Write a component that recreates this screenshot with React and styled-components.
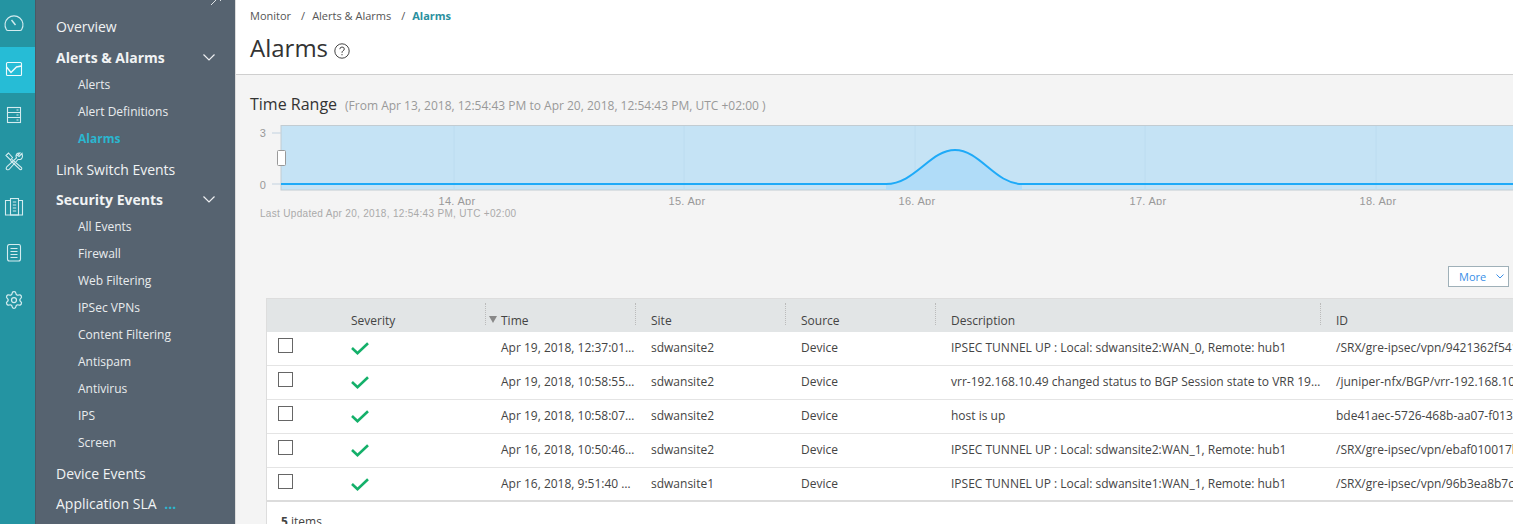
import React from "react";
import styled, { createGlobalStyle } from "styled-components";
import { Settings } from "lucide-react";

const GlobalStyle = createGlobalStyle`
  html, body {
    margin: 0;
    height: 100%;
    overflow: hidden;
    background: #fff;
    font-family: "Open Sans", "Liberation Sans", sans-serif;
  }
`;

const RailSvg = ({ children }) => (
  <svg viewBox="0 0 20 20" width="20" height="20">
    {children}
  </svg>
);

const GearIcon = styled(Settings)`
  && {
    stroke-width: 1.500;
  }
`;

const railIcons = [
  <RailSvg>
    <path d="M2.300 15.500 A9 9 0 1 1 17.700 15.500 Q17.300 16.500 16 16.500 H4 Q2.700 16.500 2.300 15.500 Z" />
    <path d="M7.500 6 L11.500 11" strokeWidth="1.400" />
  </RailSvg>,
  <RailSvg>
    <rect x="2.500" y="2.500" width="15" height="13" rx="1" />
    <path d="M2.500 7 L7 12.500 L12.500 7 L17.500 6" strokeWidth="1.400" />
  </RailSvg>,
  <RailSvg>
    <rect x="3.500" y="1.500" width="13" height="15" />
    <path d="M3.500 6.500 H16.500 M3.500 11.500 H16.500 M12.500 4 H14.500 M12.500 9 H14.500 M12.500 14 H14.500" />
  </RailSvg>,
  <RailSvg>
    <path d="M2 3.500 L4.500 1 L8.500 5.500 L6.500 8 Z M8 7.500 L17.500 15.500 Q18.500 18 16 17.500 L6.500 8.500" />
    <path d="M18 1.500 L15 4.500 L13.500 3.500 L16 1 Q12.500 0.500 12 3.800 Q12 5 12.500 5.800 L3 14.500 Q1.500 16.500 2.800 17.500 Q4.500 18.300 5.500 17 L14 7.500 Q18.300 8 18.500 4.300 Z" />
  </RailSvg>,
  <RailSvg>
    <rect x="6.500" y="0.500" width="8" height="16.500" />
    <path d="M6.500 2.500 H1.500 V17 H18.500 V2.500 H14.500 M8.800 4 H12.200 M8.800 7 H12.200 M8.800 10 H12.200 M8.800 13 H12.200" />
  </RailSvg>,
  <RailSvg>
    <rect x="3.500" y="0.500" width="13" height="16.500" rx="2" />
    <path d="M6.500 4.500 H13.500 M6.500 7.500 H13.500 M6.500 10.500 H13.500 M6.500 13.500 H13.500" />
  </RailSvg>,
  <GearIcon size={20} />,
];

const navItems = [
  { label: "Overview", gap: 1 },
  {
    label: "Alerts & Alarms",
    open: true,
    children: ["Alerts", "Alert Definitions", "Alarms"],
  },
  { label: "Link Switch Events" },
  {
    label: "Security Events",
    open: true,
    children: [
      "All Events",
      "Firewall",
      "Web Filtering",
      "IPSec VPNs",
      "Content Filtering",
      "Antispam",
      "Antivirus",
      "IPS",
      "Screen",
    ],
  },
  { label: "Device Events" },
];

const rows = [
  {
    time: "Apr 19, 2018, 12:37:01 PM",
    site: "sdwansite2",
    description: "IPSEC TUNNEL UP : Local: sdwansite2:WAN_0, Remote: hub1",
    id: "/SRX/gre-ipsec/vpn/9421362f541",
  },
  {
    time: "Apr 19, 2018, 10:58:55 AM",
    site: "sdwansite2",
    description:
      "vrr-192.168.10.49 changed status to BGP Session state to VRR 192.168.10.49",
    id: "/juniper-nfx/BGP/vrr-192.168.10.49",
  },
  {
    time: "Apr 19, 2018, 10:58:07 AM",
    site: "sdwansite2",
    description: "host is up",
    id: "bde41aec-5726-468b-aa07-f0137",
  },
  {
    time: "Apr 16, 2018, 10:50:46 AM",
    site: "sdwansite2",
    description: "IPSEC TUNNEL UP : Local: sdwansite2:WAN_1, Remote: hub1",
    id: "/SRX/gre-ipsec/vpn/ebaf010017b",
  },
  {
    time: "Apr 16, 2018, 9:51:40 AM",
    site: "sdwansite1",
    description: "IPSEC TUNNEL UP : Local: sdwansite1:WAN_1, Remote: hub1",
    id: "/SRX/gre-ipsec/vpn/96b3ea8b7c1",
  },
];

const ticks = [
  { grid: 454, label: 457, text: "14. Apr" },
  { grid: 684, label: 687, text: "15. Apr" },
  { grid: 915, label: 917, text: "16. Apr" },
  { grid: 1145, label: 1148, text: "17. Apr" },
  { grid: 1376, label: 1378, text: "18. Apr" },
];

const curve = "C915 184 930 150 955 150 C980 150 995 184 1022 184";

const Chevron = () => (
  <ChevronIcon viewBox="0 0 12 7">
    <polyline points="0.500,0.500 6,6 11.500,0.500" />
  </ChevronIcon>
);

const TimeChart = () => (
  <ChartSvg viewBox="250 120 1263 85">
    <rect x="281" y="125.500" width="1240" height="64.500" fill="#c5e3f5" stroke="#c2ccd2" />
    {ticks.map((t) => (
      <line key={t.grid} x1={t.grid} x2={t.grid} y1="126" y2="190" stroke="#bcdcf0" />
    ))}
    <path d={`M886 190 V184 ${curve} V190 Z`} fill="#b0dcf8" />
    <path d={`M281 184 H886 ${curve} H1513`} fill="none" stroke="#1eaaf8" strokeWidth="2" />
    <path d="M272 133 H281 M272 184 H281" stroke="#c2d2e0" />
    <rect x="277.500" y="150.500" width="8" height="15" rx="1" fill="#fff" stroke="#999" />
    <AxisText x="263" y="137" textAnchor="middle">3</AxisText>
    <AxisText x="263" y="189" textAnchor="middle">0</AxisText>
    {ticks.map((t) => (
      <AxisText key={t.text} x={t.label} y="205" textAnchor="middle">
        {t.text}
      </AxisText>
    ))}
  </ChartSvg>
);

const App = () => (
  <Page>
    <GlobalStyle />
    <Rail>
      {railIcons.map((icon, i) => (
        <RailItem key={i} $active={i === 1}>
          {icon}
        </RailItem>
      ))}
    </Rail>
    <Nav>
      <PinMark viewBox="0 0 12 8">
        <path d="M1 7 L6 2 M4 0 L10 0 M8 0 L11 3" />
      </PinMark>
      {navItems.map((item) => (
        <div key={item.label}>
          <NavHeading $open={item.open} $gap={item.gap}>
            {item.label}
            {item.open && <Chevron />}
          </NavHeading>
          {item.children && (
            <SubList>
              {item.children.map((child) => (
                <SubItem key={child} $active={child === "Alarms"}>
                  {child}
                </SubItem>
              ))}
            </SubList>
          )}
        </div>
      ))}
      <NavHeading>
        Application SLA <Dots>...</Dots>
      </NavHeading>
    </Nav>
    <Main>
      <Header>
        <Crumbs>
          <span>Monitor</span>
          <span>
            <Slash>/</Slash>Alerts &amp; Alarms
          </span>
          <span>
            <Slash>/</Slash>
            <b>Alarms</b>
          </span>
        </Crumbs>
        <TitleRow>
          <Title>Alarms</Title>
          <svg viewBox="0 0 16 16" width="16" height="16" fill="none" stroke="#444">
            <circle cx="8" cy="8" r="7.200" />
            <path d="M5.800 6.200 Q6 4 8 4 Q10.300 4 10.300 6 Q10.300 7.200 8.800 8 Q8 8.500 8 9.800" />
            <path d="M8 11 V12.300" />
          </svg>
        </TitleRow>
      </Header>
      <Content>
        <RangeHeading>
          <RangeTitle>Time Range</RangeTitle>
          <RangeNote>(From Apr 13, 2018, 12:54:43 PM to Apr 20, 2018, 12:54:43 PM, UTC +02:00 )</RangeNote>
        </RangeHeading>
        <TimeChart />
        <Updated>Last Updated Apr 20, 2018, 12:54:43 PM, UTC +02:00</Updated>
        <Toolbar>
          <MoreButton>
            More
            <MoreChevron viewBox="0 0 8 5">
              <polyline points="0.500,0.500 4,4 7.500,0.500" />
            </MoreChevron>
          </MoreButton>
        </Toolbar>
        <Table>
          <HeadRow>
            <HeadCell />
            <HeadCell>Severity</HeadCell>
            <HeadCell $divider $sorted>
              Time
            </HeadCell>
            <HeadCell $divider>Site</HeadCell>
            <HeadCell $divider>Source</HeadCell>
            <HeadCell $divider>Description</HeadCell>
            <HeadCell $divider>ID</HeadCell>
          </HeadRow>
          {rows.map((row, i) => (
            <Row key={i} $last={i === rows.length - 1}>
              <Cell>
                <Checkbox />
              </Cell>
              <Cell>
                <CheckMark viewBox="0 0 18 13">
                  <polyline points="1,6 6.500,11.200 17,1.200" />
                </CheckMark>
              </Cell>
              <Cell>{row.time}</Cell>
              <Cell>{row.site}</Cell>
              <Cell>Device</Cell>
              <Cell>{row.description}</Cell>
              <Cell>{row.id}</Cell>
            </Row>
          ))}
          <Footer>
            <b>5</b> items
          </Footer>
        </Table>
      </Content>
    </Main>
  </Page>
);

const Page = styled.div`
  display: flex;
  width: 1513px;
  height: 524px;
  overflow: hidden;
`;

const Rail = styled.div`
  flex: 0 0 35px;
  padding-top: 1px;
  background: #2494a2;
`;

const RailItem = styled.div`
  height: 46px;
  padding-right: 7px;
  display: flex;
  align-items: center;
  justify-content: center;
  background: ${(p) => (p.$active ? "#26bcd6" : "transparent")};

  svg {
    fill: none;
    stroke: ${(p) => (p.$active ? "#f0fafc" : "#d4ecef")};
    stroke-width: 1.100;
  }
`;

const Nav = styled.div`
  position: relative;
  flex: 0 0 200px;
  box-sizing: border-box;
  padding-top: 11px;
  background: #566370;
  border-left: 1px solid #4a5864;
  color: #f1f3f4;
`;

const PinMark = styled.svg`
  position: absolute;
  top: -2px;
  left: 174px;
  width: 12px;
  height: 8px;
  fill: none;
  stroke: #dde2e5;
`;

const NavHeading = styled.div`
  height: 30px;
  margin-bottom: ${(p) => p.$gap || 0}px;
  padding: 0 20px 0 20px;
  display: flex;
  align-items: center;
  justify-content: ${(p) => (p.$open ? "space-between" : "flex-start")};
  gap: 4px;
  font-size: 14px;
  font-weight: ${(p) => (p.$open ? 700 : 400)};
  white-space: pre;
`;

const ChevronIcon = styled.svg`
  width: 12px;
  height: 7px;
  fill: none;
  stroke: #eef0f2;
  stroke-width: 1.200;
`;

const Dots = styled.span`
  color: #2bb6cf;
  font-weight: 700;
`;

const SubList = styled.div`
  margin: -1px 0 2px;
`;

const SubItem = styled.div`
  height: 27px;
  padding-left: 42px;
  display: flex;
  align-items: center;
  font-size: 12px;
  font-weight: ${(p) => (p.$active ? 700 : 400)};
  color: ${(p) => (p.$active ? "#2bb6cf" : "#e9ecee")};
`;

const Main = styled.div`
  flex: 1;
  min-width: 0;
  border-left: 1px solid #dcdcdc;
  overflow: hidden;
`;

const Header = styled.div`
  height: 75px;
  box-sizing: border-box;
  padding: 8px 14px 0;
  background: #fff;
  border-bottom: 1px solid #cfcfcf;
`;

const Crumbs = styled.div`
  display: flex;
  gap: 10px;
  height: 15px;
  line-height: 15px;
  font-size: 11px;
  color: #555;

  b {
    color: #2a8f9e;
    font-weight: 700;
  }
`;

const Slash = styled.span`
  margin-right: 7px;
`;

const TitleRow = styled.div`
  display: flex;
  align-items: center;
  gap: 6px;
  margin-top: 8px;
  height: 33px;

  svg {
    margin-top: 7px;
  }
`;

const Title = styled.h1`
  margin: 0;
  font-size: 24px;
  font-weight: 400;
  color: #333;
`;

const Content = styled.div`
  height: 449px;
  padding: 19px 0 0 14px;
  background: #f4f4f4;
`;

const RangeHeading = styled.div`
  display: flex;
  align-items: center;
  gap: 8px;
  height: 20px;
`;

const RangeTitle = styled.span`
  font-size: 16px;
  color: #333;
`;

const RangeNote = styled.span`
  margin-top: 2px;
  font-size: 12px;
  color: #999;
`;

const ChartSvg = styled.svg`
  display: block;
  width: 1263px;
  height: 85px;
  margin-top: 6px;
`;

const AxisText = styled.text`
  font-family: "Liberation Sans", Arial, sans-serif;
  font-size: 11px;
  letter-spacing: 0.300px;
  fill: #999;
`;

const Updated = styled.div`
  height: 12px;
  margin: 3px 0 0 10px;
  line-height: 12px;
  font-family: "Liberation Sans", Arial, sans-serif;
  font-size: 10px;
  letter-spacing: 0.310px;
  color: #aaa;
`;

const Toolbar = styled.div`
  display: flex;
  justify-content: flex-end;
  margin: 46px 4px 11px 0;
`;

const MoreButton = styled.div`
  width: 61px;
  height: 21px;
  box-sizing: border-box;
  padding-left: 10px;
  display: flex;
  align-items: center;
  gap: 10px;
  background: #fff;
  border: 1px solid #9fb0b8;
  font-size: 11px;
  color: #3a8fe8;
`;

const MoreChevron = styled.svg`
  width: 8px;
  height: 5px;
  fill: none;
  stroke: #3a8fe8;
`;

const Table = styled.div`
  width: 1400px;
  margin-left: 16px;
  background: #fff;
  border-top: 1px solid #dddddd;
  border-left: 1px solid #dddddd;
  box-sizing: border-box;
`;

const columns = "69px 150px 150px 150px 150px 385px 1fr";

const HeadRow = styled.div`
  display: grid;
  grid-template-columns: ${columns};
  height: 33px;
  background: #e2e5e6;
`;

const HeadCell = styled.div`
  position: relative;
  padding: 13px 15px 0;
  font-size: 12px;
  line-height: 17px;
  color: #444;

  &::before {
    content: "";
    display: ${(p) => (p.$divider ? "block" : "none")};
    position: absolute;
    left: -1px;
    top: 4px;
    height: 22px;
    border-left: 1px dotted #bbb;
  }

  &::after {
    content: "";
    display: ${(p) => (p.$sorted ? "block" : "none")};
    position: absolute;
    left: 3px;
    top: 17px;
    border: 4px solid transparent;
    border-top: 7px solid #888;
    border-bottom: 0;
  }
`;

const Row = styled.div`
  display: grid;
  grid-template-columns: ${columns};
  height: 34px;
  box-sizing: border-box;
  border-bottom: ${(p) => (p.$last ? "2px solid #dcdcdc" : "1px solid #e4e4e4")};
`;

const Cell = styled.div`
  padding: 7px 0 0 15px;
  min-width: 0;
  font-size: 12px;
  line-height: 17px;
  color: #444;
  white-space: nowrap;
  overflow: hidden;
  text-overflow: ellipsis;
`;

const Checkbox = styled.div`
  width: 15px;
  height: 15px;
  box-sizing: border-box;
  margin: -1px 0 0 -4px;
  background: #fff;
  border: 1px solid #666;
`;

const CheckMark = styled.svg`
  display: block;
  width: 18px;
  height: 13px;
  margin-top: 3px;
  fill: none;
  stroke: #14b06a;
  stroke-width: 2.600;
`;

const Footer = styled.div`
  padding: 11px 14px;
  font-size: 12px;
  line-height: 17px;
  color: #444;
`;

export default App;
